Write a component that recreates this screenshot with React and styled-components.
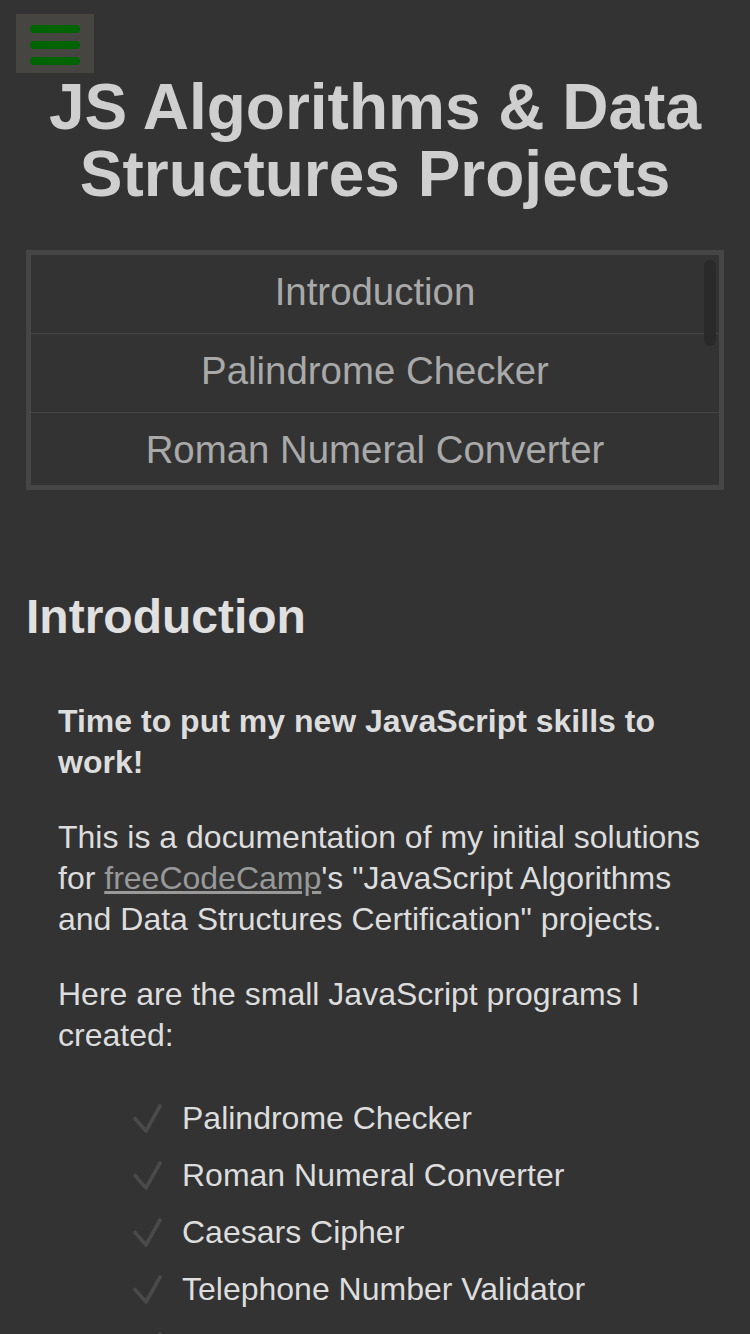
import React from "react";
import styled, { createGlobalStyle } from "styled-components";

const GlobalStyle = createGlobalStyle`
  html, body {
    margin: 0;
    padding: 0;
    background: #333333;
  }
  body {
    font-family: "Liberation Sans", Arial, Helvetica, sans-serif;
    color: #dddddd;
  }
`;

// Layout
const Page = styled.div`
  min-height: 1334px;
  padding: 0 26px;
  background: #333333;
`;

const MenuButton = styled.button`
  position: fixed;
  top: 14px;
  left: 16px;
  width: 78px;
  height: 59px;
  padding: 11px 14px 8px;
  border: none;
  background: #464541;
  display: flex;
  flex-direction: column;
  gap: 8px;
  cursor: pointer;
  z-index: 10;
`;

const Bar = styled.span`
  display: block;
  height: 8px;
  border-radius: 4px;
  background: #006400;
`;

const Title = styled.h1`
  margin: 74px 0 42px;
  text-align: center;
  font-size: 64px;
  line-height: 67px;
  font-weight: bold;
  color: #cfcfcf;
`;

const NavBox = styled.nav`
  position: relative;
  border: 5px solid #464646;
`;

const NavList = styled.ul`
  list-style: none;
  margin: 0;
  padding: 0;
  max-height: 230px;
  overflow-y: auto;
  scrollbar-width: none;
  &::-webkit-scrollbar {
    display: none;
  }
`;

const NavItem = styled.li`
  height: 78px;
  line-height: 74px;
  border-bottom: 1px solid #464646;
  text-align: center;
  font-size: 38.4px;
  color: #a9a9a9;
  cursor: pointer;
`;

// overlay scrollbar thumb (mac style)
const Thumb = styled.div`
  position: absolute;
  top: 5px;
  right: 3px;
  width: 12px;
  height: 86px;
  border-radius: 6px;
  background: #2a2a2a;
`;

const Section = styled.section`
  margin-top: 99px;
`;

const SectionTitle = styled.h2`
  margin: 0 0 57px;
  font-size: 48px;
  font-weight: bold;
  color: #e0e0e0;
`;

const Body = styled.div`
  padding-left: 32px;
`;

const Para = styled.p`
  margin: 0 0 34px;
  font-size: 32px;
  line-height: 41px;
  font-weight: ${(p) => (p.$bold ? "bold" : "normal")};
  color: #dddddd;
`;

const Link = styled.a`
  color: #999999;
  text-decoration: underline;
`;

const CheckList = styled.ul`
  list-style: none;
  margin: 33px 0 0;
  padding: 0 0 0 75px;
`;

const CheckItem = styled.li`
  display: flex;
  align-items: center;
  gap: 20px;
  height: 57px;
  font-size: 32px;
  color: #dddddd;
`;

const Check = () => (
  <svg width="29" height="29" viewBox="0 0 29 29" fill="none">
    <path
      d="M2 14.5 L13 27 L27 2"
      stroke="#4a4a4a"
      strokeWidth="3.6"
      strokeLinecap="round"
      strokeLinejoin="round"
    />
  </svg>
);

const navLinks = [
  "Introduction",
  "Palindrome Checker",
  "Roman Numeral Converter",
  "Caesars Cipher",
  "Telephone Number Validator",
  "Cash Register",
  "Conclusion",
];

const projects = [
  "Palindrome Checker",
  "Roman Numeral Converter",
  "Caesars Cipher",
  "Telephone Number Validator",
  "Cash Register",
];

const App = () => {
  return (
    <>
      <GlobalStyle />
      <Page>
        <MenuButton aria-label="menu">
          <Bar />
          <Bar />
          <Bar />
        </MenuButton>

        <Title>JS Algorithms &amp; Data Structures Projects</Title>

        <NavBox>
          <NavList>
            {navLinks.map((link, index) => (
              <NavItem key={index}>{link}</NavItem>
            ))}
          </NavList>
          <Thumb />
        </NavBox>

        <Section>
          <SectionTitle>Introduction</SectionTitle>
          <Body>
            <Para $bold>Time to put my new JavaScript skills to work!</Para>
            <Para>
              This is a documentation of my initial solutions for{" "}
              <Link href="#">freeCodeCamp</Link>'s "JavaScript Algorithms and Data
              Structures Certification" projects.
            </Para>
            <Para>Here are the small JavaScript programs I created:</Para>
            <CheckList>
              {projects.map((item, index) => (
                <CheckItem key={index}>
                  <Check />
                  {item}
                </CheckItem>
              ))}
            </CheckList>
          </Body>
        </Section>
      </Page>
    </>
  );
};

export default App;
